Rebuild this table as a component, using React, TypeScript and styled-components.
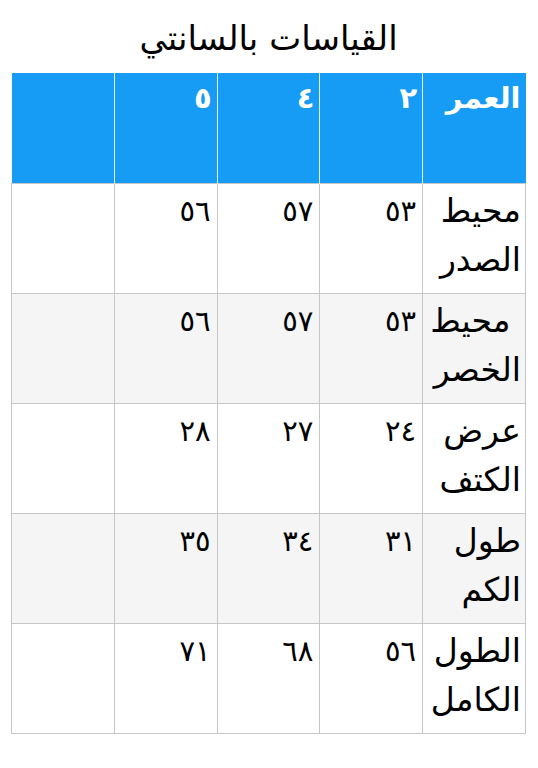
import React from "react";
import styled, { createGlobalStyle } from "styled-components";

const Global = createGlobalStyle`
  html, body { margin: 0; padding: 0; background: #ffffff; }
  body { font-family: "DejaVu Sans", "Noto Sans", sans-serif; color: #000; }
`;

const Page = styled.div`
  width: 538px;
  padding: 0 12px 0 11px;
  box-sizing: border-box;
  direction: rtl;
`;

const Title = styled.h1`
  margin: 0;
  height: 73px;
  display: flex;
  align-items: center;
  justify-content: center;
  padding-top: 2px;
  box-sizing: border-box;
  font-size: 34px;
  font-weight: normal;
  color: #000;
`;

const Table = styled.table`
  width: 515px;
  border-collapse: collapse;
  table-layout: fixed;
  direction: rtl;
`;

const HeadCell = styled.th`
  height: 110px;
  background: #179cf5;
  color: #ffffff;
  font-size: 29px;
  font-weight: bold;
  text-align: right;
  vertical-align: top;
  padding: 8px 5px 0 5px;
  border-left: 1px solid #e6f2fb;
  box-sizing: border-box;
  &:last-child { border-left: none; }
`;

const Row = styled.tr<{ $alt: boolean }>`
  background: ${(p) => (p.$alt ? "#f5f5f5" : "#ffffff")};
`;

const Cell = styled.td<{ $label?: boolean }>`
  height: 110px;
  border: 1px solid #c6c6c6;
  font-size: ${(p) => (p.$label ? "33px" : "29px")};
  line-height: ${(p) => (p.$label ? "49px" : "46px")};
  text-align: right;
  vertical-align: top;
  padding: ${(p) => (p.$label ? "2px 4px 0 4px" : "4px 6px 0 6px")};
  box-sizing: border-box;
  color: #000;
`;

const headers = ["العمر", "٢", "٤", "٥", ""];
const rows = [
  ["محيط الصدر", "٥٣", "٥٧", "٥٦", ""],
  ["\u00a0محيط الخصر", "٥٣", "٥٧", "٥٦", ""],
  ["عرض الكتف", "٢٤", "٢٧", "٢٨", ""],
  ["طول الكم", "٣١", "٣٤", "٣٥", ""],
  ["الطول الكامل", "٥٦", "٦٨", "٧١", ""],
];

export default function App() {
  return (
    <>
      <Global />
      <Page>
        <Title>القياسات بالسانتي</Title>
        <Table>
          <thead>
            <tr>
              {headers.map((h, i) => (
                <HeadCell key={i}>{h}</HeadCell>
              ))}
            </tr>
          </thead>
          <tbody>
            {rows.map((r, i) => (
              <Row key={i} $alt={i % 2 === 1}>
                {r.map((c, j) => (
                  <Cell key={j} $label={j === 0}>
                    {c}
                  </Cell>
                ))}
              </Row>
            ))}
          </tbody>
        </Table>
      </Page>
    </>
  );
}
